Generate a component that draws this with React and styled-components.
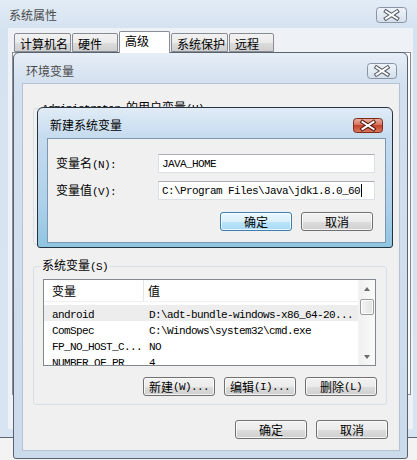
import React, { useId } from "react";
import styled, { createGlobalStyle } from "styled-components";

const GlobalStyle = createGlobalStyle`
  body { margin: 0; background: #f3f3f3; }
  #root { width: 417px; height: 460px; }
`;

const MONO = `"Liberation Mono", "DejaVu Sans Mono", monospace`;

const Latin = styled.span`
  font-family: ${MONO};
  font-size: 11px;
  letter-spacing: -0.6px;
`;

// chinese runs stay in the ui font, latin runs go monospace like SimSun
function Mixed({ text }) {
  return text
    .split(/([\u3000-\u9fff\uff00-\uffef]+)/)
    .filter(Boolean)
    .map((part, i) =>
      /[\u3000-\u9fff]/.test(part) ? <span key={i}>{part}</span> : <Latin key={i}>{part}</Latin>
    );
}

function CloseButton({ w, h, red }) {
  const id = useId();
  const cx = w / 2;
  const cy = h / 2;
  const x = `M${cx - 5.5} ${cy - 3.5} L${cx + 5.5} ${cy + 3.5} M${cx + 5.5} ${cy - 3.5} L${cx - 5.5} ${cy + 3.5}`;
  return (
    <svg width={w} height={h} viewBox={`0 0 ${w} ${h}`}>
      <defs>
        <linearGradient id={id} x1="0" y1="0" x2="0" y2="1">
          {red ? (
            <>
              <stop offset="0" stopColor="#eab2a3" />
              <stop offset="0.45" stopColor="#d67560" />
              <stop offset="0.5" stopColor="#c4432c" />
              <stop offset="1" stopColor="#dc7a60" />
            </>
          ) : (
            <>
              <stop offset="0" stopColor="#eef3f9" />
              <stop offset="0.5" stopColor="#e2eaf3" />
              <stop offset="1" stopColor="#d3deeb" />
            </>
          )}
        </linearGradient>
      </defs>
      <rect x="0.5" y="0.5" width={w - 1} height={h - 1} rx="3" fill={`url(#${id})`} stroke={red ? "#7b2a1c" : "#8893a3"} />
      <path d={x} stroke={red ? "#5a1a10" : "#555b63"} strokeWidth="4" strokeLinecap="square" fill="none" />
      <path d={x} stroke="#fff" strokeWidth="2" strokeLinecap="square" fill="none" />
    </svg>
  );
}

const Desktop = styled.div`
  position: relative;
  width: 417px;
  height: 460px;
  overflow: hidden;
  background: #f3f3f3;
  font-family: "Noto Sans CJK SC", "Noto Sans", sans-serif;
  font-size: 12px;
  line-height: 16px;
  color: #000;
`;

const OuterWindow = styled.div`
  display: flex;
  flex-direction: column;
  height: 438px;
  box-sizing: border-box;
  border-bottom: 1px solid #5d6673;
  background: linear-gradient(180deg, #e2ecf6 0px, #d5e2f0 28px, #d8e4f1 100%);
`;

const TitleBar = styled.div`
  display: flex;
  align-items: center;
  justify-content: space-between;
  flex-shrink: 0;
  box-sizing: border-box;
  height: ${(p) => p.$h}px;
  padding: ${(p) => p.$pt}px ${(p) => p.$pr}px 0 ${(p) => p.$pl}px;
  color: ${(p) => (p.$active ? "#000" : "#4a4a4a")};

  svg {
    display: block;
  }
`;

const OuterClient = styled.div`
  flex: 1;
  display: flex;
  flex-direction: column;
  margin: 0 4px 8px 8px;
  padding-top: 3px;
  background: #eef2f7;
`;

const TabStrip = styled.div`
  display: flex;
  align-items: flex-end;
  gap: 1px;
  height: 21px;
  padding-left: 6px;
  flex-shrink: 0;
`;

const Tab = styled.div`
  position: relative;
  z-index: ${(p) => (p.$sel ? 1 : 0)};
  box-sizing: border-box;
  width: ${(p) => p.$w}px;
  height: ${(p) => (p.$sel ? 22 : 19)}px;
  margin-bottom: ${(p) => (p.$sel ? -1 : 0)}px;
  padding: ${(p) => (p.$sel ? 1 : 2)}px 0 0 5px;
  border: 1px solid #898c95;
  border-bottom: ${(p) => (p.$sel ? "none" : "1px solid #898c95")};
  border-radius: 2px 2px 0 0;
  background: ${(p) =>
    p.$sel ? "#ffffff" : "linear-gradient(180deg, #f2f2f2 0%, #ebebeb 50%, #dddddd 51%, #cfcfcf 100%)"};
  white-space: nowrap;
`;

const Panel = styled.div`
  height: 343px;
  margin: 0 2px 0 4px;
  box-sizing: border-box;
  border: 1px solid #898c95;
  background: #fbfbfb;
`;

const Dialog = styled.div`
  position: absolute;
  left: ${(p) => p.$x}px;
  top: ${(p) => p.$y}px;
  width: ${(p) => p.$w}px;
  height: ${(p) => p.$h}px;
  box-sizing: border-box;
  display: flex;
  flex-direction: column;
  border: 1px solid ${(p) => (p.$active ? "#26323f" : "#59626e")};
  border-radius: 6px 6px 3px 3px;
  background: ${(p) =>
    p.$active
      ? "linear-gradient(180deg, #e0ebf6 0px, #c6dbef 30px, #add0ea 70%, #8fc5e0 100%)"
      : "linear-gradient(180deg, #e6eef7 0px, #d3e0ef 30px, #ccdbec 100%)"};
`;

const Client = styled.div`
  flex: 1;
  display: flex;
  flex-direction: column;
  box-sizing: border-box;
  margin: 0 ${(p) => p.$mr}px ${(p) => p.$mb}px ${(p) => p.$ml}px;
  padding: ${(p) => p.$pad || "0"};
  border: 1px solid ${(p) => (p.$active ? "#7d97b3" : "#b4c2d3")};
  background: #f0f0f0;
`;

const Group = styled.fieldset`
  box-sizing: border-box;
  height: ${(p) => p.$h}px;
  min-width: 0;
  margin: ${(p) => p.$mt}px 12px 0 10px;
  padding: 0;
  border: 1px solid #d5dfe5;
  border-radius: 3px;
`;

const Legend = styled.legend`
  margin-left: 6px;
  padding: 0 2px;
  line-height: 16px;
`;

const ListView = styled.div`
  display: flex;
  height: 87px;
  margin: 4px 10px 0 9px;
  box-sizing: border-box;
  border: 1px solid #828790;
  background: #fff;
  overflow: hidden;
`;

const ListMain = styled.div`
  flex: 1;
  min-width: 0;
  display: flex;
  flex-direction: column;
`;

const Header = styled.div`
  display: flex;
  height: 22px;
  flex-shrink: 0;
  box-sizing: border-box;
  border-bottom: 1px solid #f0f0f0;
`;

const HeaderCell = styled.div`
  box-sizing: border-box;
  width: ${(p) => (p.$w ? `${p.$w}px` : "auto")};
  flex: ${(p) => (p.$w ? "none" : 1)};
  padding-left: ${(p) => (p.$w ? 8 : 4)}px;
  border-right: ${(p) => (p.$w ? "1px solid #e5e5e5" : "none")};
  line-height: 21px;
`;

const Rows = styled.div`
  flex: 1;
  padding-top: 3px;
  overflow: hidden;
`;

const Row = styled.div`
  display: grid;
  grid-template-columns: 100px 1fr;
  height: 16px;
  line-height: 16px;
  background: ${(p) => (p.$sel ? "#ededed" : "transparent")};
`;

const Cell = styled.div`
  padding-left: ${(p) => (p.$first ? 8 : 5)}px;
  white-space: nowrap;
  overflow: hidden;
`;

const ScrollBar = styled.div`
  width: 16px;
  flex-shrink: 0;
  display: flex;
  flex-direction: column;
  background: linear-gradient(90deg, #f0f0f0, #fafafa);
  border-left: 1px solid #f4f4f4;
`;

const ArrowBox = styled.div`
  height: 17px;
  flex-shrink: 0;
  display: flex;
  align-items: center;
  justify-content: center;
`;

const Arrow = styled.span`
  width: 0;
  height: 0;
  border-left: 3.5px solid transparent;
  border-right: 3.5px solid transparent;
  ${(p) => (p.$down ? "border-top: 4px solid #6b6b6b;" : "border-bottom: 4px solid #6b6b6b;")}
`;

const Thumb = styled.div`
  height: 16px;
  margin: 2px 1px 0 1px;
  box-sizing: border-box;
  border: 1px solid #9c9c9c;
  border-radius: 2px;
  background: linear-gradient(90deg, #f4f4f4, #e2e2e2);
  box-shadow: inset 0 0 0 1px rgba(255, 255, 255, 0.8);
`;

const Spacer = styled.div`
  flex: 1;
`;

const ButtonRow = styled.div`
  display: flex;
  justify-content: flex-end;
  gap: 9px;
  margin-top: ${(p) => p.$mt}px;
  padding-right: ${(p) => p.$pr}px;
`;

const Button = styled.button`
  width: 72px;
  height: 19px;
  box-sizing: border-box;
  padding: 0;
  border: 1px solid ${(p) => (p.$focus ? "#3c7fb1" : "#707070")};
  border-radius: 3px;
  background: ${(p) =>
    p.$focus
      ? "linear-gradient(180deg, #eaf6fd 0%, #d9f0fc 50%, #bee6fd 51%, #a7d9f5 100%)"
      : "linear-gradient(180deg, #f2f2f2 0%, #ebebeb 50%, #dddddd 51%, #cfcfcf 100%)"};
  box-shadow: inset 0 0 0 1px rgba(255, 255, 255, 0.75);
  font: inherit;
  line-height: 16px;
  color: #000;
  display: flex;
  align-items: center;
  justify-content: center;
  white-space: nowrap;
`;

const FormRow = styled.div`
  display: flex;
  align-items: center;
  margin-bottom: 8px;
`;

const Label = styled.div`
  width: 102px;
  white-space: nowrap;
`;

const Field = styled.div`
  width: 217px;
  height: 19px;
  box-sizing: border-box;
  padding-left: 3px;
  display: flex;
  align-items: center;
  border: 1px solid #dbdfe6;
  border-top-color: #abadb3;
  background: #fff;
  font-family: ${MONO};
  font-size: 11px;
  letter-spacing: -0.6px;
  white-space: nowrap;
`;

const Caret = styled.span`
  width: 1px;
  height: 13px;
  margin-left: 1px;
  background: #000;
`;

const variables = [
  ["android", "D:\\adt-bundle-windows-x86_64-20..."],
  ["ComSpec", "C:\\Windows\\system32\\cmd.exe"],
  ["FP_NO_HOST_C...", "NO"],
  ["NUMBER_OF_PR", "4"],
];

const tabs = [
  ["计算机名", 57],
  ["硬件", 46],
  ["高级", 51, true],
  ["系统保护", 57],
  ["远程", 45],
];

export default function App() {
  return (
    <Desktop>
      <GlobalStyle />

      <OuterWindow>
        <TitleBar $h={28} $pt={1} $pl={9} $pr={10}>
          <span>系统属性</span>
          <CloseButton w={31} h={16} />
        </TitleBar>
        <OuterClient>
          <TabStrip>
            {tabs.map(([name, w, sel]) => (
              <Tab key={name} $w={w} $sel={sel}>
                {name}
              </Tab>
            ))}
          </TabStrip>
          <Panel />
        </OuterClient>
      </OuterWindow>

      <Dialog $x={13} $y={52} $w={395} $h={407}>
        <TitleBar $h={30} $pt={6} $pl={12} $pr={10}>
          <span>环境变量</span>
          <CloseButton w={30} h={16} />
        </TitleBar>
        <Client $ml={8} $mr={7} $mb={7}>
          <Group $mt={15} $h={146}>
            <Legend>
              <Mixed text="Administrator 的用户变量(U)" />
            </Legend>
          </Group>
          <Group $mt={12} $h={148}>
            <Legend>
              <Mixed text="系统变量(S)" />
            </Legend>
            <ListView>
              <ListMain>
                <Header>
                  <HeaderCell $w={100}>变量</HeaderCell>
                  <HeaderCell>值</HeaderCell>
                </Header>
                <Rows>
                  {variables.map(([name, value], i) => (
                    <Row key={name} $sel={i === 0}>
                      <Cell $first>
                        <Mixed text={name} />
                      </Cell>
                      <Cell>
                        <Mixed text={value} />
                      </Cell>
                    </Row>
                  ))}
                </Rows>
              </ListMain>
              <ScrollBar>
                <ArrowBox>
                  <Arrow />
                </ArrowBox>
                <Thumb />
                <Spacer />
                <ArrowBox>
                  <Arrow $down />
                </ArrowBox>
              </ScrollBar>
            </ListView>
            <ButtonRow $mt={11} $pr={9}>
              <Button><Mixed text="新建(W)..." /></Button>
              <Button><Mixed text="编辑(I)..." /></Button>
              <Button><Mixed text="删除(L)" /></Button>
            </ButtonRow>
          </Group>
          <ButtonRow $mt={15} $pr={11}>
            <Button>确定</Button>
            <Button>取消</Button>
          </ButtonRow>
        </Client>
      </Dialog>

      <Dialog $x={37} $y={107} $w={356} $h={141} $active>
        <TitleBar $h={30} $pt={4} $pl={12} $pr={9} $active>
          <span>新建系统变量</span>
          <CloseButton w={30} h={15} red />
        </TitleBar>
        <Client $ml={9} $mr={6} $mb={4} $active $pad="15px 10px 0 8px">
          <FormRow>
            <Label><Mixed text="变量名(N):" /></Label>
            <Field>JAVA_HOME</Field>
          </FormRow>
          <FormRow>
            <Label><Mixed text="变量值(V):" /></Label>
            <Field>
              C:\Program Files\Java\jdk1.8.0_60
              <Caret />
            </Field>
          </FormRow>
          <ButtonRow $mt={4} $pr={2}>
            <Button $focus>确定</Button>
            <Button>取消</Button>
          </ButtonRow>
        </Client>
      </Dialog>
    </Desktop>
  );
}
